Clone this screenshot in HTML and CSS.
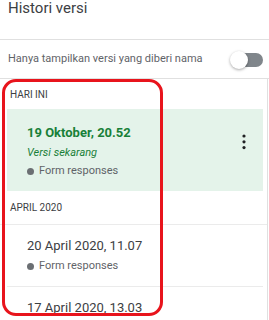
FILE: index.html
```html
<!DOCTYPE html>
<html lang="id">
<head>
  <meta charset="UTF-8" />
  <title>Histori versi</title>
  <link rel="stylesheet" href="styles.css">
</head>
<body>
  <div id="panel">
    <div class="panel-title">Histori versi</div>

    <div class="filter-row">
      <span class="filter-text">Hanya tampilkan versi yang diberi nama</span>
      <div class="toggle"><div class="toggle-thumb"></div></div>
    </div>

    <div class="version-list">
      <div class="group-label">HARI INI</div>
      <div class="version current">
        <div class="version-info">
          <div class="version-date">19 Oktober, 20.52</div>
          <div class="version-note">Versi sekarang</div>
          <div class="version-author"><span class="author-dot"></span>Form responses</div>
        </div>
        <svg class="kebab" width="6" height="16" viewBox="0 0 6 16">
          <circle cx="3" cy="2" r="1.6" />
          <circle cx="3" cy="7.8" r="1.6" />
          <circle cx="3" cy="13.6" r="1.6" />
        </svg>
      </div>

      <div class="group-label with-line">APRIL 2020</div>
      <div class="version">
        <div class="version-info">
          <div class="version-date">20 April 2020, 11.07</div>
          <div class="version-author"><span class="author-dot"></span>Form responses</div>
        </div>
      </div>
      <div class="version">
        <div class="version-info">
          <div class="version-date">17 April 2020, 13.03</div>
        </div>
      </div>
    </div>

    <!-- kotak merah penanda -->
    <div class="highlight-box"></div>
  </div>
</body>
</html>
```

FILE: styles.css
```css
body {
  margin: 0;
  background: #fff;
  font-family: Roboto, "Liberation Sans", sans-serif;
  overflow: hidden;
}

#panel {
  position: relative;
  width: 269px;
  height: 320px;
  overflow: hidden;
}

.panel-title {
  height: 39px;
  padding-left: 8px;
  font-size: 15px;
  line-height: 17px;
  color: #3c4043;
  border-bottom: 1px solid #e0e0e0;
}

.filter-row {
  display: flex;
  align-items: center;
  justify-content: space-between;
  height: 38px;
  padding: 0 6px 0 8px;
  border-bottom: 1px solid #e0e0e0;
}

.filter-text {
  font-size: 11px;
  line-height: 16px;
  color: #5f6368;
}

.toggle {
  position: relative;
  width: 30px;
  height: 14px;
  border-radius: 7px;
  background: #80868b;
  margin-top: 2px;
}

.toggle-thumb {
  position: absolute;
  left: -3px;
  top: -2px;
  width: 18px;
  height: 18px;
  border-radius: 50%;
  background: #fff;
  box-shadow: 0 1px 3px rgba(0, 0, 0, 0.35);
}

.version-list {
  height: 242px;
  margin-right: 1px;
  border-right: 1px solid #e0e0e0;
}

.group-label {
  padding: 9px 0 7px 10px;
  font-size: 10px;
  line-height: 14px;
  color: #3c4043;
}

.group-label.with-line {
  padding: 10px 0 9px 10px;
  border-bottom: 1px solid #ebebeb;
}

.version {
  display: flex;
  justify-content: space-between;
  align-items: flex-start;
  margin: 0 4px 0 7px;
  padding: 12px 0 12px 20px;
  border-bottom: 1px solid #ebebeb;
}

.version.current {
  background: #e4f3ea;
  padding-top: 15px;
  border-bottom: none;
}

.version-date {
  font-size: 13px;
  line-height: 18px;
  color: #3c4043;
}

.current .version-date {
  font-weight: bold;
  color: #188038;
}

.version-note {
  margin-top: 3px;
  font-size: 11px;
  line-height: 16px;
  font-style: italic;
  color: #188038;
}

.version-author {
  display: flex;
  align-items: center;
  margin-top: 3px;
  font-size: 11px;
  line-height: 16px;
  color: #5f6368;
}

.current .version-author {
  margin-top: 2px;
}

.author-dot {
  width: 7px;
  height: 7px;
  border-radius: 50%;
  background: #6b6f73;
  margin-right: 5px;
}

.kebab {
  fill: #202124;
  margin: 10px 16px 0 0;
}

.highlight-box {
  position: absolute;
  left: 2px;
  top: 79px;
  width: 155px;
  height: 231px;
  border: 3.5px solid #e8141c;
  border-radius: 14px;
}
```
